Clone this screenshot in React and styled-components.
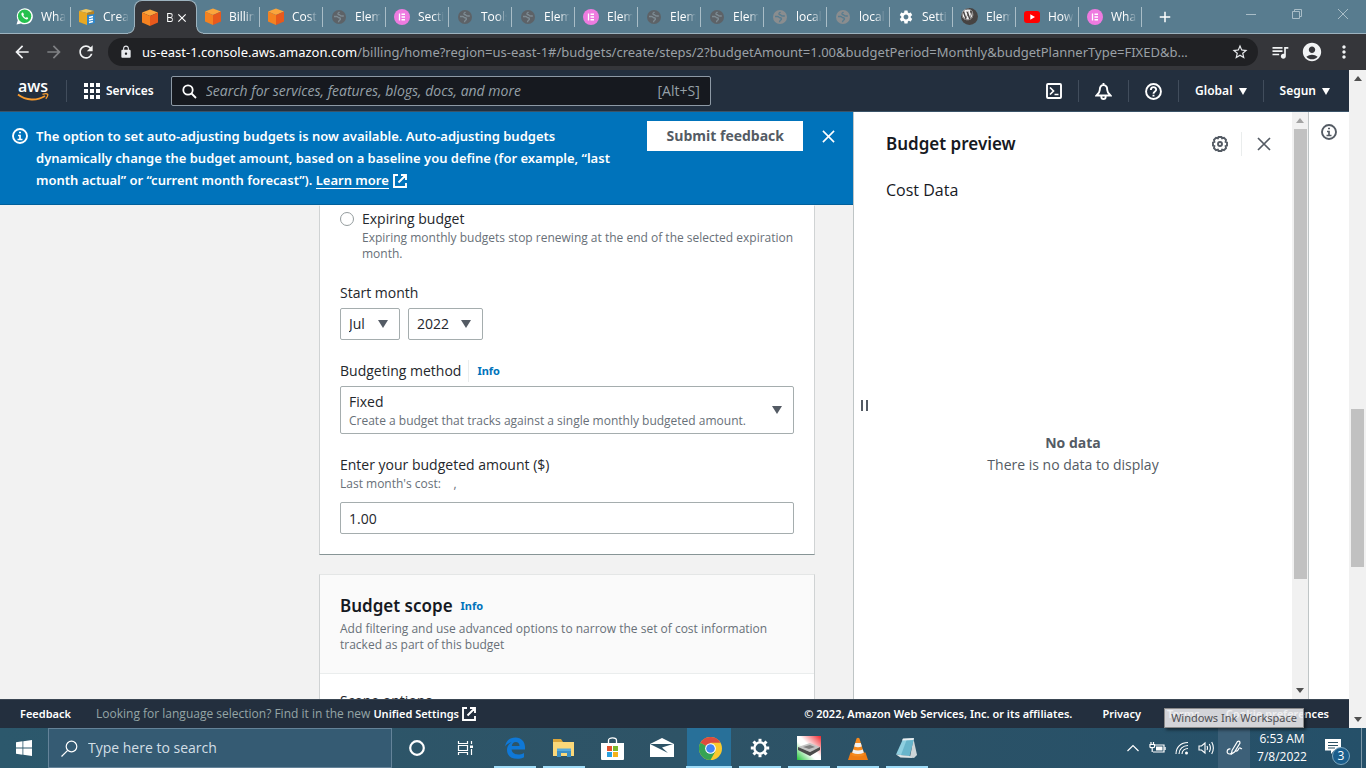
import React from "react";
import styled, { createGlobalStyle, css } from "styled-components";
import {
  MdArrowBack,
  MdArrowForward,
  MdRefresh,
  MdLock,
  MdStarBorder,
  MdQueueMusic,
  MdAccountCircle,
  MdMoreVert,
  MdSettings,
  MdAdd,
  MdClose,
} from "react-icons/md";
import { FaWordpress } from "react-icons/fa";

const noto = `"Noto Sans", "Open Sans", sans-serif`;
const openSans = `"Open Sans", "Noto Sans", sans-serif`;

const GlobalStyle = createGlobalStyle`
  *, *::before, *::after { box-sizing: border-box; }
  body { margin: 0; font-family: ${openSans}; font-size: 14px; line-height: 22px; color: #16191f; }
  button, input, select { font: inherit; color: inherit; margin: 0; padding: 0; border: 0; background: none; border-radius: 0; }
  h2, p { margin: 0; }
  a { color: inherit; text-decoration: none; }
  svg { display: block; flex: none; }
`;

const Screen = styled.div`
  display: flex;
  flex-direction: column;
  height: 100vh;
  overflow: hidden;
`;

/* ---------- Browser chrome ---------- */

const TabStrip = styled.div`
  display: flex;
  align-items: stretch;
  height: 34px;
  padding-left: 8px;
  background: #587c8f;
  border-bottom: 1px solid #9db3bf;
  font-size: 12px;
  color: #fff;
`;

const Tab = styled.button`
  display: flex;
  align-items: center;
  gap: 8px;
  width: 63px;
  flex: none;
  padding: 0 5px 0 8px;
  position: relative;
  ${(p) =>
    p.$active
      ? css`
          background: #35363a;
          border: 1px solid #9db3bf;
          border-bottom: 0;
          border-radius: 8px 8px 0 0;
          margin-bottom: -1px;
          padding: 0 7px;
          > svg:last-child {
            margin-left: -8px;
          }
          &::before,
          &::after {
            content: "";
            position: absolute;
            bottom: 0;
            width: 7px;
            height: 7px;
          }
          &::before {
            left: -7px;
            background: radial-gradient(circle at 0 0, transparent 5px, #9db3bf 6px, #35363a 7px);
          }
          &::after {
            right: -7px;
            background: radial-gradient(circle at 100% 0, transparent 5px, #9db3bf 6px, #35363a 7px);
          }
        `
      : !p.$bare &&
        css`
          &::after {
            content: "";
            position: absolute;
            right: 0;
            top: 7px;
            height: 20px;
            width: 1px;
            background: #a9bdc7;
          }
        `}
`;

const TabTitle = styled.span`
  flex: 1;
  min-width: 0;
  overflow: hidden;
  white-space: nowrap;
  text-align: left;
  mask-image: linear-gradient(to right, #000 60%, transparent 100%);
`;

const NewTab = styled.button`
  width: 45px;
  display: grid;
  place-items: center;
`;

const WindowButtons = styled.div`
  display: flex;
  margin-left: auto;
  padding-bottom: 5px;
  color: #a9bdc7;
`;

const WindowButton = styled.button`
  width: 46px;
  display: grid;
  place-items: center;
`;

const Toolbar = styled.div`
  display: flex;
  align-items: center;
  gap: 8px;
  height: 36px;
  padding: 0 10px;
  background: #35363a;
  color: #e8eaed;
`;

const ToolButton = styled.button`
  display: grid;
  place-items: center;
  width: 24px;
  height: 28px;
  color: ${(p) => (p.$dim ? "#7f8184" : "#f1f3f4")};
`;

const AddressBar = styled.div`
  display: flex;
  align-items: center;
  gap: 9px;
  flex: 1;
  min-width: 0;
  height: 28px;
  margin: 0 2px;
  padding: 0 9px 0 11px;
  border-radius: 14px;
  background: #202124;
`;

const Address = styled.span`
  flex: 1;
  min-width: 0;
  overflow: hidden;
  white-space: nowrap;
  text-overflow: ellipsis;
  font-family: ${noto};
  font-size: 13px;
  color: #9aa0a6;
  b {
    font-weight: 400;
    color: #fff;
  }
`;

/* ---------- Page frame ---------- */

const Viewport = styled.div`
  display: flex;
  flex: 1;
  min-height: 0;
`;

const Page = styled.div`
  display: flex;
  flex-direction: column;
  flex: 1;
  min-width: 0;
`;

const ScrollTrack = styled.div`
  display: flex;
  flex-direction: column;
  align-items: center;
  flex: none;
  width: ${(p) => p.$width}px;
  background: #f1f1f1;
`;

const ScrollArrow = styled.button`
  display: grid;
  place-items: center;
  width: 100%;
  height: 17px;
  flex: none;
`;

const ScrollLane = styled.div`
  display: grid;
  grid-template-rows: ${(p) => p.$rows};
  width: 13px;
  flex: 1;
`;

const ScrollThumb = styled.div`
  grid-row: 2;
  background: #c1c1c1;
`;

/* ---------- AWS navigation ---------- */

const Nav = styled.header`
  display: flex;
  align-items: center;
  height: 42px;
  flex: none;
  padding-top: 1px;
  background: #232f3e;
  border-bottom: 1px solid #3b5368;
  color: #fff;
  font-family: ${noto};
  font-size: 12px;
  font-weight: 600;
`;

const NavItem = styled.button`
  display: flex;
  align-items: center;
  justify-content: center;
  gap: 6px;
  height: 22px;
  padding: 0 ${(p) => p.$pad || 16}px;
  border-left: ${(p) => (p.$first ? 0 : 1)}px solid #414d5c;
`;

const NavSearch = styled.label`
  display: flex;
  align-items: center;
  gap: 9px;
  flex: 0 1 540px;
  height: 30px;
  padding: 0 10px;
  border: 1px solid #8d99a5;
  border-radius: 2px;
  background: #16191f;
  color: #95a0a8;
  font-family: ${openSans};
  font-size: 14px;
  font-weight: 400;
`;

const NavSearchInput = styled.input`
  flex: 1;
  min-width: 0;
  font-style: italic;
  outline: 0;
  &::placeholder {
    color: #95a0a8;
    opacity: 1;
  }
`;

const NavRight = styled.div`
  display: flex;
  margin-left: auto;
  padding-right: 3px;
`;

/* ---------- Console body ---------- */

const Body = styled.div`
  display: flex;
  flex: 1;
  min-height: 0;
  background: #fff;
`;

const Main = styled.main`
  display: flex;
  flex-direction: column;
  flex: 1;
  min-width: 0;
  background: #f2f2f2;
  overflow: hidden;
`;

const Banner = styled.section`
  display: flex;
  align-items: flex-start;
  flex: none;
  height: 93px;
  padding: 9px 0 0 12px;
  background: #0073bb;
  border-bottom: 1px solid #00609c;
  color: #fff;
  font-family: ${noto};
  font-size: 13px;
  font-weight: 600;
`;

const BannerText = styled.p`
  flex: 1;
  padding: 4px 8px 0;
  white-space: nowrap;
`;

const BannerIcon = styled.span`
  padding-top: 7px;
`;

const LearnMore = styled.a`
  display: inline-flex;
  align-items: center;
  gap: 4px;
  line-height: 16px;
  span {
    border-bottom: 1px solid #fff;
  }
`;

const BannerButton = styled.button`
  height: 30px;
  padding: 0 19px;
  background: #fff;
  color: #545b64;
  font-family: ${openSans};
  font-size: 14px;
  font-weight: 700;
`;

const IconButton = styled.button`
  display: grid;
  place-items: center;
  width: ${(p) => p.$width || 30}px;
  height: 30px;
  color: ${(p) => p.$color || "inherit"};
`;

const Content = styled.div`
  display: flex;
  flex-direction: column;
  gap: 19px;
  flex: 1;
  min-height: 0;
  padding: 0 38px 0 319px;
  overflow: hidden;
`;

const Card = styled.section`
  flex: none;
  background: #fff;
  border: 1px solid #d0d3d4;
  border-top-color: ${(p) => (p.$continued ? "transparent" : "#e4e6e6")};
  border-bottom-color: #879596;
`;

const CardBody = styled.div`
  padding: ${(p) => p.$top}px 20px 20px;
  color: #24272c;
`;

const CardHeader = styled.header`
  padding: 18px 20px 20px;
  background: #fafafa;
  border-bottom: 1px solid #eaeded;
`;

const TitleRow = styled.div`
  display: flex;
  align-items: center;
  gap: 8px;
  height: 26px;
  margin-bottom: 2px;
`;

const Title = styled.h2`
  font-family: ${noto};
  font-size: 17px;
  font-weight: 600;
`;

const InfoLink = styled.a`
  color: #0073bb;
  font-family: ${noto};
  font-size: 11px;
  font-weight: 700;
`;

const Hint = styled.p`
  font-size: 12px;
  line-height: 16px;
  color: #687078;
`;

const RadioRow = styled.label`
  display: flex;
  gap: 8px;
  margin-bottom: 20px;
`;

const Radio = styled.input`
  appearance: none;
  width: 14px;
  height: 14px;
  margin-top: 4px;
  flex: none;
  border: 1px solid #949c9e;
  border-radius: 50%;
  background: #fff;
`;

const Field = styled.div`
  margin-bottom: ${(p) => (p.$last ? 0 : 20)}px;
`;

const LabelRow = styled.div`
  display: flex;
  align-items: center;
  height: 22px;
  a {
    margin-left: 7px;
    padding-left: 8px;
    border-left: 1px solid #eaeded;
  }
`;

const Controls = styled.div`
  display: flex;
  gap: 8px;
  margin-top: ${(p) => p.$gap || 4}px;
`;

const SelectBox = styled.div`
  display: grid;
  align-items: center;
  width: ${(p) => p.$width};
  height: ${(p) => (p.$tall ? 48 : 32)}px;
  border: 1px solid #a5adae;
  border-radius: 2px;
  > * {
    grid-area: 1 / 1;
  }
  > svg {
    justify-self: end;
    margin-right: 11px;
    pointer-events: none;
  }
`;

const Select = styled.select`
  appearance: none;
  width: 100%;
  height: 100%;
  padding: 0 8px ${(p) => (p.$tall ? 16 : 0)}px;
`;

const SelectHint = styled.span`
  align-self: end;
  padding: 0 8px 4px;
  font-size: 12px;
  line-height: 16px;
  color: #687078;
  pointer-events: none;
`;

const TextInput = styled.input`
  width: 100%;
  height: 32px;
  padding: 0 8px;
  border: 1px solid #a5adae;
  border-radius: 2px;
`;

/* ---------- Preview panel ---------- */

const Preview = styled.aside`
  display: flex;
  flex: none;
  width: 439px;
  border-left: 1px solid #bfc5c6;
`;

const ResizeHandle = styled.button`
  align-self: center;
  width: 21px;
  height: 12px;
  display: grid;
  place-items: center;
`;

const PreviewBody = styled.div`
  display: flex;
  flex-direction: column;
  flex: 1;
  padding: 17px 7px 0 11px;
`;

const PreviewHeader = styled.div`
  display: flex;
  align-items: center;
  height: 30px;
  h2 {
    flex: 1;
  }
`;

const Divider = styled.span`
  width: 1px;
  height: 24px;
  background: #eaeded;
`;

const PreviewSubtitle = styled.p`
  margin-top: 20px;
  font-size: 16px;
`;

const Empty = styled.div`
  display: flex;
  flex-direction: column;
  align-items: center;
  margin: 231px 25px 0 0;
  color: #545b64;
`;

const Rail = styled.div`
  display: flex;
  justify-content: center;
  flex: none;
  width: 41px;
  padding: 5px 1px 0 0;
  border-left: 1px solid #bfc5c6;
`;

/* ---------- Console footer ---------- */

const Footer = styled.footer`
  display: flex;
  align-items: center;
  height: 29px;
  flex: none;
  padding: 0 20px;
  background: #232f3e;
  border-top: 1px solid #3b4754;
  color: #fff;
  font-family: ${noto};
  font-size: 11px;
  font-weight: 600;
  white-space: nowrap;
`;

const FooterNote = styled.span`
  display: flex;
  align-items: center;
  gap: 3px;
  margin: 0 auto 0 25px;
  color: #95a5a6;
  font-family: ${openSans};
  font-size: 12px;
  font-weight: 400;
  a {
    color: #fff;
    font-family: ${noto};
    font-size: 11px;
    font-weight: 600;
  }
`;

const FooterLinks = styled.span`
  display: flex;
  gap: 26px;
`;

const Copyright = styled.span`
  padding-right: 4px;
`;

/* ---------- Taskbar ---------- */

const Taskbar = styled.div`
  display: flex;
  align-items: stretch;
  height: 40px;
  flex: none;
  background: linear-gradient(90deg, #2c586c, #2e5366 50%, #255069);
  color: #fff;
  position: relative;
`;

const StartButton = styled.button`
  width: 48px;
  display: grid;
  place-items: center;
`;

const TaskSearch = styled.label`
  display: flex;
  align-items: center;
  gap: 10px;
  width: 344px;
  padding: 0 12px;
  border: 1px solid #648399;
  background: #355b73;
  input {
    flex: 1;
    min-width: 0;
    outline: 0;
  }
  input::placeholder {
    color: #d3dfe6;
    opacity: 1;
  }
`;

const TaskButton = styled.button`
  width: 49px;
  display: grid;
  place-items: center;
  padding-top: 2px;
  background: ${(p) => (p.$active ? "linear-gradient(#287099, #287099) 1px 0 / 44px 100% no-repeat" : "none")};
  border-bottom: 2px solid transparent;
  border-image: ${(p) =>
    p.$open
      ? `linear-gradient(90deg, transparent ${p.$active ? 1 : 5}px, #9fdcf8 ${p.$active ? 1 : 5}px 45px, transparent 45px) 1`
      : "none"};
`;

const Tray = styled.div`
  display: flex;
  align-items: stretch;
  margin-left: auto;
`;

const TrayButton = styled.button`
  width: ${(p) => p.$width}px;
  display: grid;
  place-items: center;
  background: ${(p) => (p.$hover ? "#3d6078" : "none")};
`;

const Clock = styled.button`
  width: 64px;
  font-size: 12px;
  line-height: 18px;
`;

const Notifications = styled.button`
  position: relative;
  width: 48px;
  padding: 0 0 4px 11px;
  border-right: 1px solid #7d98a8;
  margin-right: 4px;
`;

const Badge = styled.span`
  position: absolute;
  left: 18px;
  top: 19px;
  width: 18px;
  height: 18px;
  border-radius: 50%;
  background: #1b5e8c;
  border: 1px solid #7fa8c0;
  font-size: 12px;
  line-height: 16px;
  text-align: center;
`;

const Tooltip = styled.div`
  position: absolute;
  right: 62px;
  bottom: 40px;
  padding: 0 6px;
  background: rgba(236, 236, 238, 0.88);
  border: 1px solid #8a8a8a;
  box-shadow: 2px 2px 3px rgba(0, 0, 0, 0.5);
  color: #4f4f53;
  font-family: ${noto};
  font-size: 11px;
  line-height: 18px;
  white-space: nowrap;
`;

/* ---------- Icons ---------- */

const Triangle = ({ up, size = 10, height = 8, color = "currentColor" }) => (
  <svg width={size} height={height} viewBox="0 0 10 8" preserveAspectRatio="none" aria-hidden="true">
    <path d={up ? "M0 8 5 0l5 8z" : "M0 0h10L5 8z"} fill={color} />
  </svg>
);

const Cube = () => (
  <svg width="16" height="17" viewBox="0 0 16 17">
    <path d="M8 0.500 16 3.500 8 7 0 3.500z" fill="#fba53c" />
    <path d="M0 3.500 8 7v10L0 13.500z" fill="#f58220" />
    <path d="M16 3.500 8 7v10l8-3.500z" fill="#e8591c" />
  </svg>
);

const Boxes = () => (
  <svg width="16" height="16" viewBox="0 0 16 16">
    <path d="M0 2 7 0l8 2-7 2z" fill="#f4c95d" />
    <path d="M0 2 8 4v12l-8-3z" fill="#e8a823" />
    <path d="M8 4l7-2v4L8 7z" fill="#b9811e" />
    <path d="M8 6l8-1v9l-8 2z" fill="#2f86c9" />
    <path d="M10 8.500l4-1M10 11l4-1M10 13.500l4-1" stroke="#fff" strokeWidth="1.500" />
  </svg>
);

const Globe = ({ light }) => (
  <svg width="16" height="16" viewBox="0 0 16 16">
    <circle cx="8" cy="8" r="7" fill={light ? "#8a8d8f" : "#5d6267"} />
    <path
      d="M3 7.500h2.800c1 0 1.200 1.300 2.200 1.300 1.600 0 1.800 1.400.8 2.200-.9.700-1.300 1.200-1.300 2.200M8.500 3c-.8.700-1.800 1-1.500 2 .3.900 1.500.5 2 1.200.5.600 1.300.8 2.200.8h1.600"
      fill="none"
      stroke={light ? "#587c8f" : "#7d8b93"}
      strokeWidth="1.400"
    />
  </svg>
);

const Elementor = () => (
  <svg width="16" height="16" viewBox="0 0 16 16">
    <circle cx="8" cy="8" r="8" fill="#ee7be0" />
    <path d="M5.500 4.500v7M7.500 5.250h3.500M7.500 8h3.500M7.500 10.750h3.500" stroke="#fff" strokeWidth="1.300" />
  </svg>
);

const WhatsApp = () => (
  <svg width="17" height="17" viewBox="0 0 17 17">
    <path d="M.5 16.500l1.300-4.300A8 8 0 1 1 5 15.400z" fill="#fff" />
    <circle cx="8.600" cy="8.300" r="6.700" fill="#25c14f" />
    <path
      d="M6.300 4.600c-1.400.6-1.300 2.400.5 4.500 1.900 2.200 4.300 3.200 5.200 1.700.4-.7 0-1-.9-1.500-.8-.4-.8.6-1.400.5-.9-.2-2-1.400-2.300-2.200-.1-.6.7-.7.4-1.400-.4-1-.7-1.900-1.500-1.600z"
      fill="#fff"
    />
  </svg>
);

const YouTube = () => (
  <svg width="16" height="12" viewBox="0 0 16 12">
    <rect width="16" height="12" rx="3" fill="#f00" />
    <path d="M6.300 3.300v5.400L11 6z" fill="#fff" />
  </svg>
);

const WordPress = () => (
  <svg width="17" height="17" viewBox="0 0 17 17">
    <circle cx="8.500" cy="8.500" r="8.500" fill="#464342" />
    <FaWordpress x="0.500" y="0.500" width="16" height="16" color="#f1f1f1" />
  </svg>
);

const AwsLogo = () => (
  <svg width="32" height="22" viewBox="0 0 32 22" role="img" aria-label="AWS">
    <text x="1" y="12" fontFamily="Open Sans" fontWeight="600" fontSize="16" fill="#fff">
      aws
    </text>
    <path d="M1 14.500c8 6.300 19 6.500 27 1.500" fill="none" stroke="#f79a2d" strokeWidth="1.800" />
    <path d="M25.500 14.400c2-.7 4.500-.8 5-.2.400.6-.2 2.800-1.700 4.500" fill="none" stroke="#f79a2d" strokeWidth="1.400" />
  </svg>
);

const AppGrid = () => (
  <svg width="16" height="16" viewBox="0 0 16 16" fill="#fff">
    {[0, 6, 12].map((y) => [0, 6, 12].map((x) => <rect key={x + "-" + y} x={x} y={y} width="4" height="4" />))}
  </svg>
);

const Magnifier = () => (
  <svg width="15" height="15" viewBox="0 0 15 15" fill="none" stroke="#fff" strokeWidth="1.800">
    <circle cx="6" cy="6" r="4.700" />
    <path d="M9.500 9.500 14 14" />
  </svg>
);

const CloudShell = () => (
  <svg width="16" height="16" viewBox="0 0 16 16" fill="none" stroke="#fff" strokeWidth="1.900">
    <rect x="1" y="1" width="14" height="14" rx="1" />
    <path d="M4 4.500 7.500 8 4 11.500M8.500 11.500h4" strokeWidth="1.700" />
  </svg>
);

const Bell = () => (
  <svg width="17" height="17" viewBox="0 0 16 16" fill="none" stroke="#fff" strokeWidth="1.800">
    <path d="M8 0v2M8 2C5 2 4.500 4.500 4.500 6.500 4.500 8.500 3 10 1.500 11.700h13C13 10 11.500 8.500 11.500 6.500 11.500 4.500 11 2 8 2zM6 12v1.500c0 2 4 2 4 0V12" />
  </svg>
);

const Help = () => (
  <svg width="17" height="17" viewBox="0 0 16 16" fill="none" stroke="#fff" strokeWidth="1.800">
    <circle cx="8" cy="8" r="7" />
    <path d="M5.500 6.500C5.500 3 10.500 3 10.500 6.300 10.500 8 8 8 8 10M8 11v1.600" />
  </svg>
);

const InfoCircle = () => (
  <svg width="16" height="16" viewBox="0 0 16 16" fill="none" stroke="currentColor" strokeWidth="1.900">
    <circle cx="8" cy="8" r="7" />
    <path d="M6 7.500h2V11M5.500 11.500h5M7 4.500h2" strokeWidth="1.700" />
  </svg>
);

const External = () => (
  <svg width="14" height="14" viewBox="0 0 14 14" fill="none" stroke="#fff" strokeWidth="1.900">
    <path d="M5 1H1v12h12V9M8 1h5v5M13 1 5.500 8.500" />
  </svg>
);

const Cross = ({ size = 14 }) => (
  <svg width={size} height={size} viewBox="0 0 14 14" fill="none" stroke="currentColor" strokeWidth="1.700">
    <path d="M1 1l12 12M13 1 1 13" />
  </svg>
);

const Gear = () => (
  <svg width="16" height="16" viewBox="0 0 16 16" fill="none" stroke="currentColor" strokeWidth="1.900">
    <path d="M6.500 1h3l.6 1.300 1.900-.4 2 2-.4 2L15 6.500v3l-1.400.6.4 2-2 2-1.900-.5L9.500 15h-3l-.6-1.400-1.900.5-2-2 .4-2L1 9.500v-3l1.400-.6-.4-2 2-2 1.900.4z" />
    <circle cx="8" cy="8" r="2" />
  </svg>
);

const WindowsLogo = () => (
  <svg width="16" height="16" viewBox="0 0 16 16" fill="#fff">
    <path d="M0 2.200 6.500 1.300v6.300H0zM7.300 1.200 16 0v7.600H7.300zM0 8.400h6.500v6.300L0 13.800zM7.300 8.400H16V16l-8.700-1.200z" />
  </svg>
);

const TaskMagnifier = () => (
  <svg width="17" height="17" viewBox="0 0 17 17" fill="none" stroke="#fff" strokeWidth="1.200">
    <circle cx="10.500" cy="6.500" r="5.300" />
    <path d="M6.700 10.300.5 16.500" />
  </svg>
);

const Cortana = () => (
  <svg width="16" height="16" viewBox="0 0 16 16">
    <circle cx="8" cy="8" r="6.800" fill="none" stroke="#fff" strokeWidth="2.200" />
  </svg>
);

const TaskView = () => (
  <svg width="18" height="16" viewBox="0 0 18 16" fill="none" stroke="#fff" strokeWidth="1.200">
    <path d="M1.500 1v2.500h9V1M1.500 15v-2.500h9V15M1.500 5.500h9v5h-9zM14.500 1v3M14.500 9v6" />
    <path d="M13 5.500h3V8h-3z" fill="#fff" stroke="none" />
  </svg>
);

const Edge = () => (
  <svg width="22" height="22" viewBox="0 0 22 22">
    <path
      d="M1 9.500C2 3.500 6 .5 11.500.5 17.500.5 21 5 21 10v2.600H7.600c.3 3.500 3.400 4.900 6.400 4.900 2.300 0 4.300-.6 6-1.600v4.400c-2 1-4.200 1.500-6.800 1.500C7 21.800 3 18.300 3 13c0-3.500 1.800-6.200 4.800-7.700C4.800 5.800 2.500 7.300 1 9.500zM7.800 8.900h7.700C15.500 6.500 14 5 11.800 5 9.600 5 8.200 6.500 7.800 8.900z"
      fill="#0f78d7"
    />
  </svg>
);

const Explorer = () => (
  <svg width="23" height="20" viewBox="0 0 23 20">
    <path d="M1 1h8l2 3h11v13H1z" fill="#dca63a" />
    <path d="M1 4h21v14H1z" fill="#fbd879" />
    <path d="M5 12h14v7h-4v-4H9v4H5z" fill="#3c8fc4" />
    <path d="M5 10.500h14V13H5z" fill="#57aadb" />
  </svg>
);

const Store = () => (
  <svg width="23" height="23" viewBox="0 0 23 23">
    <path d="M7.500 6V3.500c0-3.500 8-3.500 8 0V6" fill="none" stroke="#fff" strokeWidth="1.300" />
    <path d="M0 6h23v15.500c0 1-.5 1.500-1.500 1.500h-20C.5 23 0 22.500 0 21.500z" fill="#fff" />
    <path d="M6 9h5v5H6z" fill="#e2512d" />
    <path d="M12 9h5v5h-5z" fill="#7bb82c" />
    <path d="M6 15h5v5H6z" fill="#2ba0de" />
    <path d="M12 15h5v5h-5z" fill="#f5b21a" />
  </svg>
);

const Mail = () => (
  <svg width="24" height="20" viewBox="0 0 24 20">
    <path d="M12 0 24 6v13H0V6z" fill="#fff" />
    <path d="M0 6h23L12 9.500l6 5.500z" fill="#2d5366" />
  </svg>
);

const Chrome = () => (
  <svg width="23" height="23" viewBox="0 0 24 24">
    <circle cx="12" cy="12" r="12" fill="#f9c92e" />
    <path d="M12 12 1.600 6A12 12 0 0 1 22.400 6H12z" fill="#dd4b3e" />
    <path d="M1.600 6A12 12 0 0 0 12 24l5-8.800L12 12z" fill="#35a354" />
    <circle cx="12" cy="12" r="5.600" fill="#fff" />
    <circle cx="12" cy="12" r="4.500" fill="#4285f4" />
  </svg>
);

const Cog = () => (
  <svg width="20" height="20" viewBox="0 0 20 20" fill="none" stroke="#fff">
    <circle cx="10" cy="10" r="5.600" strokeWidth="2.400" />
    {[0, 45, 90, 135, 180, 225, 270, 315].map((a) => (
      <path key={a} d="M10 3.800V.8" strokeWidth="3" transform={`rotate(${a} 10 10)`} />
    ))}
  </svg>
);

const Drive = () => (
  <svg width="24" height="24" viewBox="0 0 24 24">
    <defs>
      <linearGradient id="drive-bg" x1="1" y1="0" x2="0" y2="1">
        <stop offset="0" stopColor="#f0242c" />
        <stop offset=".45" stopColor="#fff" />
        <stop offset=".6" stopColor="#fff" />
        <stop offset="1" stopColor="#1fc436" />
      </linearGradient>
    </defs>
    <path d="M0 0h24v24H0z" fill="url(#drive-bg)" />
    <path d="M1 11l12-4 10 4-10 5z" fill="#c4c4c4" />
    <path d="M1 11l12 5v4L1 14zM13 16l10-5v3l-10 6z" fill="#4a4a4a" />
    <path d="M6 11l7-2 5 2-6 2z" fill="#808080" />
  </svg>
);

const Vlc = () => (
  <svg width="22" height="23" viewBox="0 0 22 23">
    <path d="M3.500 15.500h15L21 23H1z" fill="#ef7d14" />
    <path d="M9.500 1.500q1.500-1.500 3 0L17.500 18q-6.500 3-13 0z" fill="#f58a1f" />
    <path d="M8.200 6h5.600l1 3.500q-3.800 1.500-7.600 0zM6.200 12.500q4.800 2 9.600 0l1 3.300q-5.800 2.400-11.600 0z" fill="#f1f1f1" />
  </svg>
);

const Notepad = () => (
  <svg width="23" height="23" viewBox="0 0 23 23">
    <path d="M18.500 2l3.500 16-3 3-4-1z" fill="#cfd6d8" />
    <path d="M8 2l11-.500L14.500 19 1 17.500z" fill="#8ecfe0" />
    <path d="M12 2l7-.500L14.500 19 6 18z" fill="#4ea4bd" opacity=".6" />
    <path d="M8 1.500l11-.500-.5 2L7 3.500z" fill="#e9eef0" />
    <path d="M1 17.500 14.500 19l4 2-13-.500z" fill="#dfe5e6" />
  </svg>
);

const Chevron = () => (
  <svg width="12" height="8" viewBox="0 0 12 8" fill="none" stroke="#fff" strokeWidth="1.200">
    <path d="M.5 7 6 1.500 11.500 7" />
  </svg>
);

const Battery = () => (
  <svg width="17" height="14" viewBox="0 0 17 14" fill="none" stroke="#fff" strokeWidth="1.200">
    <path d="M2 1v2M4.500 1v2M1 3.500h4.500V6c0 1-4.500 1-4.500 0zM3.200 7v4M6 4h9v7H4" />
    <path d="M7 5.500h6.500v4H7zM15.500 6h1.200v3h-1.200z" fill="#fff" stroke="none" />
  </svg>
);

const Wifi = () => (
  <svg width="14" height="14" viewBox="0 0 14 14" fill="none" stroke="#fff" strokeWidth="1.100">
    <path d="M1 13C1 6 6 1.500 13 1.500M4 13c0-5 4-8.500 9-8.500M7 13c0-3.500 3-5.500 6-5.500" />
    <circle cx="11.500" cy="12" r="1.500" fill="#fff" stroke="none" />
  </svg>
);

const Speaker = () => (
  <svg width="17" height="14" viewBox="0 0 17 14" fill="none" stroke="#fff" strokeWidth="1.100">
    <path d="M1 5h2.500L7 2v10L3.500 9H1zM9 5q1 2 0 4M11.300 3q2.200 4 0 8M13.700 1q3.300 6 0 12" />
  </svg>
);

const Pen = () => (
  <svg width="17" height="16" viewBox="0 0 17 16" fill="none" stroke="#fff" strokeWidth="1.200">
    <path d="M6 10.500 11.500 1.500q2.500-1 2.500 1.500L8.500 12 5.500 14zM4.500 9c-4-.5-4.500 5-1 5 1.500 0 2-1 2-1M9.500 11c3 1 2.500-2.500 4-3s1 1.500 2.500.5" />
  </svg>
);

const Message = () => (
  <svg width="16" height="15" viewBox="0 0 16 15">
    <path d="M0 0h16v11.500H9L6 15v-3.500H0z" fill="#fff" />
    <path d="M3 3.500h10M3 6.500h10M3 9h7" stroke="#2d5366" />
  </svg>
);

/* ---------- Data ---------- */

const globe = <Globe />;
const paleGlobe = <Globe light />;
const pink = <Elementor />;
const cube = <Cube />;

const tabs = [
  { title: "WhatsApp", icon: <WhatsApp /> },
  { title: "Create", icon: <Boxes />, bare: true },
  { title: "Budgets", icon: cube, active: true },
  { title: "Billing", icon: cube },
  { title: "Cost", icon: cube },
  { title: "Elementor", icon: globe },
  { title: "Section", icon: pink },
  { title: "Tools", icon: globe },
  { title: "Elementor", icon: globe },
  { title: "Elementor", icon: pink },
  { title: "Elementor", icon: globe },
  { title: "Elementor", icon: globe },
  { title: "localhost", icon: paleGlobe },
  { title: "localhost", icon: paleGlobe },
  { title: "Settings", icon: <MdSettings size={16} /> },
  { title: "Elementor", icon: <WordPress /> },
  { title: "How", icon: <YouTube /> },
  { title: "What", icon: pink },
];

const apps = [
  { name: "Cortana", icon: <Cortana /> },
  { name: "Task view", icon: <TaskView /> },
  { name: "Edge", icon: <Edge />, open: true },
  { name: "File Explorer", icon: <Explorer />, open: true },
  { name: "Store", icon: <Store /> },
  { name: "Mail", icon: <Mail /> },
  { name: "Chrome", icon: <Chrome />, open: true, active: true },
  { name: "Settings", icon: <Cog />, open: true },
  { name: "Drive", icon: <Drive />, open: true },
  { name: "VLC", icon: <Vlc />, open: true },
  { name: "Notepad", icon: <Notepad />, open: true },
];

const Scrollbar = ({ width, rows, arrow }) => (
  <ScrollTrack $width={width}>
    <ScrollArrow aria-label="Scroll up">
      <Triangle up size={8} height={5} color={arrow} />
    </ScrollArrow>
    <ScrollLane $rows={rows}>
      <ScrollThumb />
    </ScrollLane>
    <ScrollArrow aria-label="Scroll down">
      <Triangle size={8} height={5} color="#505050" />
    </ScrollArrow>
  </ScrollTrack>
);

const BrowserChrome = () => (
  <>
    <TabStrip>
      {tabs.map((t, i) => (
        <Tab key={i} $active={t.active} $bare={t.bare}>
          {t.icon}
          <TabTitle>{t.title}</TabTitle>
          {t.active && <MdClose size={14} />}
        </Tab>
      ))}
      <NewTab aria-label="New tab">
        <MdAdd size={18} />
      </NewTab>
      <WindowButtons>
        <WindowButton aria-label="Minimize">
          <svg width="10" height="10" viewBox="0 0 10 10" stroke="currentColor">
            <path d="M0 5.500h10" />
          </svg>
        </WindowButton>
        <WindowButton aria-label="Restore">
          <svg width="10" height="10" viewBox="0 0 10 10" fill="none" stroke="currentColor">
            <path d="M.5 2.500h7v7h-7zM2.500 2.500v-2h7v7h-2" />
          </svg>
        </WindowButton>
        <WindowButton aria-label="Close">
          <svg width="10" height="10" viewBox="0 0 10 10" stroke="currentColor">
            <path d="M0 0l10 10M10 0 0 10" />
          </svg>
        </WindowButton>
      </WindowButtons>
    </TabStrip>
    <Toolbar>
      <ToolButton aria-label="Back">
        <MdArrowBack size={20} />
      </ToolButton>
      <ToolButton $dim aria-label="Forward">
        <MdArrowForward size={20} />
      </ToolButton>
      <ToolButton aria-label="Reload">
        <MdRefresh size={20} />
      </ToolButton>
      <AddressBar>
        <MdLock size={14} />
        <Address>
          <b>us-east-1.console.aws.amazon.com</b>
          /billing/home?region=us-east-1#/budgets/create/steps/2?budgetAmount=1.00&amp;budgetPeriod=Monthly&amp;budgetPlannerType=FIXED&amp;b...
        </Address>
        <MdStarBorder size={18} />
      </AddressBar>
      <ToolButton aria-label="Media">
        <MdQueueMusic size={20} />
      </ToolButton>
      <ToolButton aria-label="Profile">
        <MdAccountCircle size={22} />
      </ToolButton>
      <ToolButton aria-label="Menu">
        <MdMoreVert size={20} />
      </ToolButton>
    </Toolbar>
  </>
);

const ConsoleNav = () => (
  <Nav>
    <NavItem $first $pad={17} aria-label="AWS home">
      <AwsLogo />
    </NavItem>
    <NavItem $pad={17}>
      <AppGrid />
      Services
    </NavItem>
    <NavSearch>
      <Magnifier />
      <NavSearchInput placeholder="Search for services, features, blogs, docs, and more" aria-label="Search" />
      <span>[Alt+S]</span>
    </NavSearch>
    <NavRight>
      <NavItem $first aria-label="CloudShell">
        <CloudShell />
      </NavItem>
      <NavItem aria-label="Notifications">
        <Bell />
      </NavItem>
      <NavItem aria-label="Help">
        <Help />
      </NavItem>
      <NavItem>
        Global <Triangle size={8} height={7} />
      </NavItem>
      <NavItem>
        Segun <Triangle size={8} height={7} />
      </NavItem>
    </NavRight>
  </Nav>
);

const BudgetForm = () => (
  <Card $continued>
    <CardBody $top={2}>
      <RadioRow>
        <Radio type="radio" name="renewal" />
        <div>
          Expiring budget
          <Hint>
            Expiring monthly budgets stop renewing at the end of the selected expiration
            <br />
            month.
          </Hint>
        </div>
      </RadioRow>
      <Field>
        <LabelRow>
          <label htmlFor="month">Start month</label>
        </LabelRow>
        <Controls>
          <SelectBox $width="60px">
            <Select id="month">
              <option>Jul</option>
            </Select>
            <Triangle color="#545b64" />
          </SelectBox>
          <SelectBox $width="75px">
            <Select aria-label="Start year">
              <option>2022</option>
            </Select>
            <Triangle color="#545b64" />
          </SelectBox>
        </Controls>
      </Field>
      <Field>
        <LabelRow>
          <label htmlFor="method">Budgeting method</label>
          <InfoLink href="#method">Info</InfoLink>
        </LabelRow>
        <Controls>
          <SelectBox $tall $width="100%">
            <Select $tall id="method">
              <option>Fixed</option>
            </Select>
            <SelectHint>Create a budget that tracks against a single monthly budgeted amount.</SelectHint>
            <Triangle color="#545b64" />
          </SelectBox>
        </Controls>
      </Field>
      <Field $last>
        <LabelRow>
          <label htmlFor="amount">Enter your budgeted amount ($)</label>
        </LabelRow>
        <Hint>Last month's cost: &nbsp;&nbsp; ,</Hint>
        <Controls $gap={10}>
          <TextInput id="amount" defaultValue="1.00" />
        </Controls>
      </Field>
    </CardBody>
  </Card>
);

const ScopeCard = () => (
  <Card>
    <CardHeader>
      <TitleRow>
        <Title>Budget scope</Title>
        <InfoLink href="#scope">Info</InfoLink>
      </TitleRow>
      <Hint>
        Add filtering and use advanced options to narrow the set of cost information
        <br />
        tracked as part of this budget
      </Hint>
    </CardHeader>
    <CardBody $top={16}>Scope options</CardBody>
  </Card>
);

export default function App() {
  return (
    <Screen>
      <GlobalStyle />
      <BrowserChrome />
      <Viewport>
        <Page>
          <ConsoleNav />
          <Body>
            <Main>
              <Banner>
                <BannerIcon>
                  <InfoCircle />
                </BannerIcon>
                <BannerText>
                  The option to set auto-adjusting budgets is now available. Auto-adjusting budgets
                  <br />
                  dynamically change the budget amount, based on a baseline you define (for example, “last
                  <br />
                  month actual” or “current month forecast”).{" "}
                  <LearnMore href="#learn">
                    <span>Learn more</span> <External />
                  </LearnMore>
                </BannerText>
                <BannerButton>Submit feedback</BannerButton>
                <IconButton $width={50} aria-label="Dismiss">
                  <Cross size={13} />
                </IconButton>
              </Banner>
              <Content>
                <BudgetForm />
                <ScopeCard />
              </Content>
            </Main>
            <Preview>
              <ResizeHandle aria-label="Resize panel">
                <svg width="7" height="11" viewBox="0 0 7 11" stroke="#545b64" strokeWidth="2">
                  <path d="M1 0v11M6 0v11" />
                </svg>
              </ResizeHandle>
              <PreviewBody>
                <PreviewHeader>
                  <Title>Budget preview</Title>
                  <IconButton $width={43} $color="#545b64" aria-label="Settings">
                    <Gear />
                  </IconButton>
                  <Divider />
                  <IconButton $width={43} $color="#545b64" aria-label="Close panel">
                    <Cross />
                  </IconButton>
                </PreviewHeader>
                <PreviewSubtitle>Cost Data</PreviewSubtitle>
                <Empty>
                  <b>No data</b>
                  <span>There is no data to display</span>
                </Empty>
              </PreviewBody>
            </Preview>
            <Scrollbar width={16} rows="0 450px 1fr" arrow="#a3a3a3" />
            <Rail>
              <IconButton $color="#545b64" aria-label="Info">
                <InfoCircle />
              </IconButton>
            </Rail>
          </Body>
          <Footer>
            <a href="#feedback">Feedback</a>
            <FooterNote>
              <span>
                Looking for language selection? Find it in the new <a href="#settings">Unified Settings</a>
              </span>
              <External />
            </FooterNote>
            <FooterLinks>
              <Copyright>© 2022, Amazon Web Services, Inc. or its affiliates.</Copyright>
              <a href="#privacy">Privacy</a>
              <a href="#terms">Terms</a>
              <a href="#cookies">Cookie preferences</a>
            </FooterLinks>
          </Footer>
        </Page>
        <Scrollbar width={17} rows="322px 158px 1fr" arrow="#505050" />
      </Viewport>
      <Taskbar>
        <StartButton aria-label="Start">
          <WindowsLogo />
        </StartButton>
        <TaskSearch>
          <TaskMagnifier />
          <input placeholder="Type here to search" aria-label="Type here to search" />
        </TaskSearch>
        {apps.map((a) => (
          <TaskButton key={a.name} aria-label={a.name} $open={a.open} $active={a.active}>
            {a.icon}
          </TaskButton>
        ))}
        <Tray>
          <TrayButton $width={24} aria-label="Show hidden icons">
            <Chevron />
          </TrayButton>
          <TrayButton $width={25} aria-label="Battery">
            <Battery />
          </TrayButton>
          <TrayButton $width={24} aria-label="Network">
            <Wifi />
          </TrayButton>
          <TrayButton $width={24} aria-label="Volume">
            <Speaker />
          </TrayButton>
          <TrayButton $width={32} $hover aria-label="Ink workspace">
            <Pen />
          </TrayButton>
          <Clock>
            6:53 AM
            <br />
            7/8/2022
          </Clock>
          <Notifications aria-label="Notifications, 3 new">
            <Message />
            <Badge>3</Badge>
          </Notifications>
        </Tray>
        <Tooltip role="tooltip">Windows Ink Workspace</Tooltip>
      </Taskbar>
    </Screen>
  );
}
